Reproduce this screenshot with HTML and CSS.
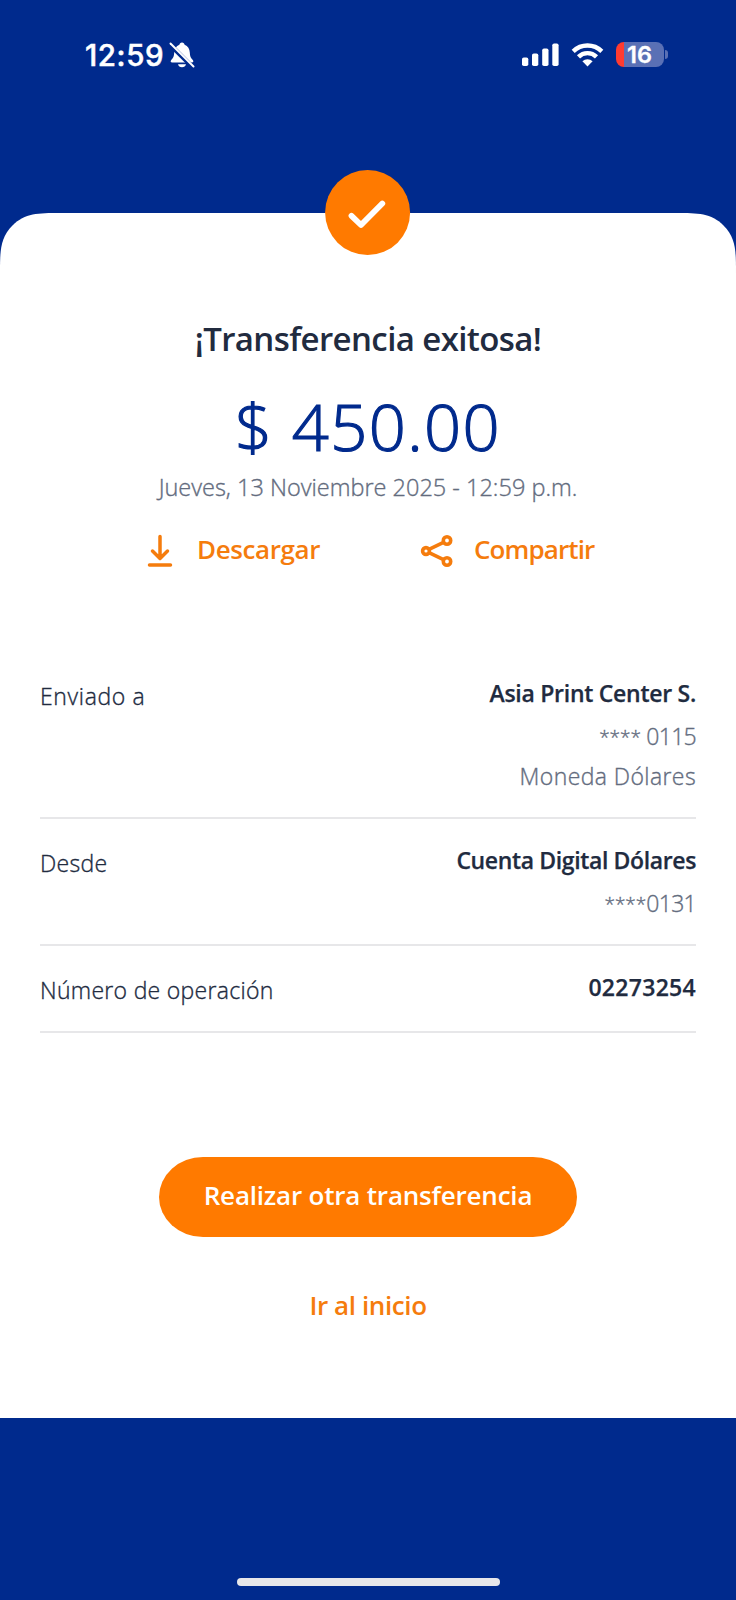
FILE: index.html
```html
<!DOCTYPE html>
<html lang="es">
<head>
<meta charset="utf-8">
<title>Transferencia exitosa</title>
<link rel="stylesheet" href="styles.css">
</head>
<body>
<div class="screen">
  <header class="status">
    <div class="status-left">
      <span class="clock">12:59</span>
      <svg class="bell" viewBox="0 0 26 28" width="26" height="28">
        <path fill="#fff" d="M13 1.500c-1.500 0-2.500 1-2.600 2.300C7 5 5.400 8 5.200 11.500c-.1 4-1 5.500-3 7.500-1 1.200-.6 2.500 1 2.500h19.600c1.600 0 2-1.300 1-2.500-2-2-2.900-3.500-3-7.500C20.600 8 19 5 15.600 3.800 15.500 2.500 14.500 1.500 13 1.500zM9 23.200h8c-.4 1.800-2 3-4 3s-3.600-1.200-4-3z"/>
        <path d="M0 2.500 24 26.500" stroke="#002a8d" stroke-width="4.500"/>
        <path d="M1.500 2.500 24.500 25.500" stroke="#fff" stroke-width="2" stroke-linecap="round"/>
      </svg>
    </div>
    <div class="status-right">
      <svg width="38" height="24" viewBox="0 0 38 24" fill="#fff">
        <rect x="1" y="14.500" width="6.300" height="8.500" rx="1.800"/>
        <rect x="11" y="10.500" width="6.300" height="12.500" rx="1.800"/>
        <rect x="21.200" y="5.500" width="6.300" height="17.500" rx="1.800"/>
        <rect x="31.300" y="0.500" width="6.300" height="22.500" rx="1.800"/>
      </svg>
      <svg class="wifi" width="33" height="24" viewBox="0 0 32 24">
        <g fill="none" stroke="#fff" stroke-width="4.400">
          <path d="M1.700 8.300a20.500 20.500 0 0 1 28.600 0"/>
          <path d="M7 13.900a12.700 12.700 0 0 1 18 0"/>
        </g>
        <path fill="#fff" d="M16 23.500 10.900 18.300a7.400 7.400 0 0 1 10.200 0z"/>
      </svg>
      <div class="battery"><span>16</span></div>
      <i class="nub"></i>
    </div>
  </header>

  <main class="sheet">
    <svg class="sheet-top" width="736" height="61" viewBox="0 0 736 61">
      <path fill="#fff" d="M0 61V60C0 38 0 25 12.500 12.500 25 0 38 0 60 0H676C698 0 711 0 723.500 12.500 736 25 736 38 736 60V61z"/>
    </svg>
    <svg class="badge" width="86" height="86" viewBox="0 0 86 86">
      <circle cx="42.600" cy="42.600" r="42.500" fill="#ff7a00"/>
      <path d="M26.500 45.800 36 55 57.300 33.500" fill="none" stroke="#fff" stroke-width="5.800" stroke-linecap="round" stroke-linejoin="round"/>
    </svg>
    <h1 class="title">¡Transferencia exitosa!</h1>
    <p class="amount">$ 450.00</p>
    <p class="date">Jueves, 13 Noviembre 2025 - 12:59 p.m.</p>

    <div class="actions">
      <a class="action">
        <svg width="26" height="34" viewBox="0 0 26 34" fill="none" stroke="#f57c0d" stroke-width="3.500" stroke-linecap="round" stroke-linejoin="round">
          <path d="M13 2.500V24M5.500 17 13 24.500 20.500 17M2.500 31H23.500"/>
        </svg>
        <span class="download-label">Descargar</span>
      </a>
      <a class="action share">
        <svg width="34" height="34" viewBox="0 0 34 34" fill="none" stroke="#f57c0d" stroke-width="3.600">
          <circle cx="6" cy="17" r="3.400"/><circle cx="27" cy="6.500" r="3.700"/><circle cx="27" cy="27.500" r="3.700"/>
          <path d="M9 15.300 23.500 8.300M9 18.700 23.500 25.700"/>
        </svg>
        <span class="share-label">Compartir</span>
      </a>
    </div>

    <section class="details">
      <div class="row row-to">
        <span class="label sender">Enviado a</span>
        <div class="values">
          <strong>Asia Print Center S.</strong>
          <span class="account"><span class="mask">****</span> 0115</span>
          <span class="currency">Moneda Dólares</span>
        </div>
      </div>
      <div class="row row-from">
        <span class="label">Desde</span>
        <div class="values">
          <strong class="product">Cuenta Digital Dólares</strong>
          <span class="account"><span class="mask">****</span>0131</span>
        </div>
      </div>
      <div class="row row-op">
        <span class="label">Número de operación</span>
        <div class="values"><strong class="operation">02273254</strong></div>
      </div>
    </section>

    <button class="primary">Realizar otra transferencia</button>
    <a class="home-link">Ir al inicio</a>
  </main>

  <footer class="bottom"><div class="indicator"></div></footer>
</div>
</body>
</html>
```
FILE: styles.css
```css
* { box-sizing: border-box; margin: 0; padding: 0; }
body { background: #002a8d; font-family: "Open Sans", "Noto Sans", sans-serif; }
.screen { width: 736px; height: 1600px; display: flex; flex-direction: column; overflow: hidden; background: #002a8d; }

.status { height: 213px; flex: none; display: flex; justify-content: space-between; align-items: flex-start; padding: 40px 68px 0 85px; color: #fff; font-family: Inter, "Liberation Sans", sans-serif; }
.status-left, .status-right { display: flex; align-items: center; height: 29px; }
.clock { font-size: 29.500px; font-weight: 500; -webkit-text-stroke: 0.5px; line-height: 30px; letter-spacing: 0.6px; width: 79px; white-space: nowrap; }
.bell { margin: 1px 0 0 5px; }
.wifi { margin-left: 12px; }
.battery { width: 48px; height: 25px; margin-left: 12px; border-radius: 8px; background: linear-gradient(90deg, #ff3b30 8px, #5a70b5 8px); display: flex; align-items: center; justify-content: center; font-size: 23.500px; line-height: 25px; font-weight: 600; -webkit-text-stroke: 0.3px; letter-spacing: 0; }
.battery span { margin-top: -1px; }
.nub { width: 3px; height: 9px; margin-left: 1.500px; border-radius: 0 4px 4px 0; background: #5a70b5; }

.sheet { position: relative; flex: none; height: 1205px; display: flex; flex-direction: column; align-items: center; background: linear-gradient(#002a8d 60px, #fff 60px); color: #212b3f; white-space: nowrap; }
.sheet-top { display: block; flex: none; }
.badge { position: absolute; left: 325px; top: -43px; }
.title { margin-top: 43px; height: 44px; line-height: 44px; font-size: 33px; font-weight: 600; letter-spacing: -0.6px; }
.amount { margin-top: 25px; height: 80px; line-height: 80px; font-size: 65px; font-weight: 300; letter-spacing: 1.400px; -webkit-text-stroke: 1.200px #002a8d; color: #002a8d; }
.date { margin-top: 5px; height: 32px; line-height: 32px; font-size: 23.500px; font-weight: 300; -webkit-text-stroke: 0.35px; color: #636c7e; }

.actions { display: flex; align-self: stretch; margin-top: 31px; padding-left: 147px; height: 34px; color: #f57c0d; font-size: 26px; font-weight: 600; line-height: 34px; letter-spacing: -0.4px; }
.action { display: flex; width: 273px; }
.action span { margin: -2px 0 0 24px; }
.action .share-label { margin-left: 20px; letter-spacing: -0.9px; }

.details { align-self: stretch; margin: 84px 40px 0; font-size: 23px; }
.row { display: flex; justify-content: space-between; border-bottom: 2px solid #e7e7e9; }
.row-to { height: 167px; }
.row-from { height: 127px; }
.row-op { height: 87px; }
.label { line-height: 36px; font-weight: 300; -webkit-text-stroke: 0.35px; letter-spacing: 0.3px; margin-top: 26px; height: 36px; }
.sender { letter-spacing: 0.65px; }
.values { display: flex; flex-direction: column; align-items: flex-end; padding-top: 21px; color: #636c7e; font-weight: 300; -webkit-text-stroke: 0.35px; line-height: 40px; }
.values strong { color: #212b3f; font-weight: 600; -webkit-text-stroke: 0.25px; letter-spacing: -0.27px; margin-bottom: 3px; }
.values .product { letter-spacing: -0.37px; }
.values .operation { letter-spacing: 0.3px; }
.account { height: 40px; letter-spacing: -0.7px; }
.mask { font-size: 19px; line-height: 1; vertical-align: 1px; letter-spacing: 0; }
.currency { letter-spacing: 0.4px; }

.primary { width: 418px; height: 80px; margin-top: 124px; border: 0; border-radius: 44px / 40px; background: #ff7a00; color: #fff; font: 600 26px/76px "Open Sans", sans-serif; letter-spacing: -0.2px; padding-bottom: 4px; }
.home-link { margin-top: 48px; height: 40px; line-height: 40px; color: #f57c0d; font-size: 26px; font-weight: 600; letter-spacing: -0.4px; }

.bottom { flex: 1; display: flex; justify-content: center; align-items: flex-end; padding-bottom: 14px; }
.indicator { width: 263px; height: 8px; border-radius: 4px; background: #e7e7ea; }
```
